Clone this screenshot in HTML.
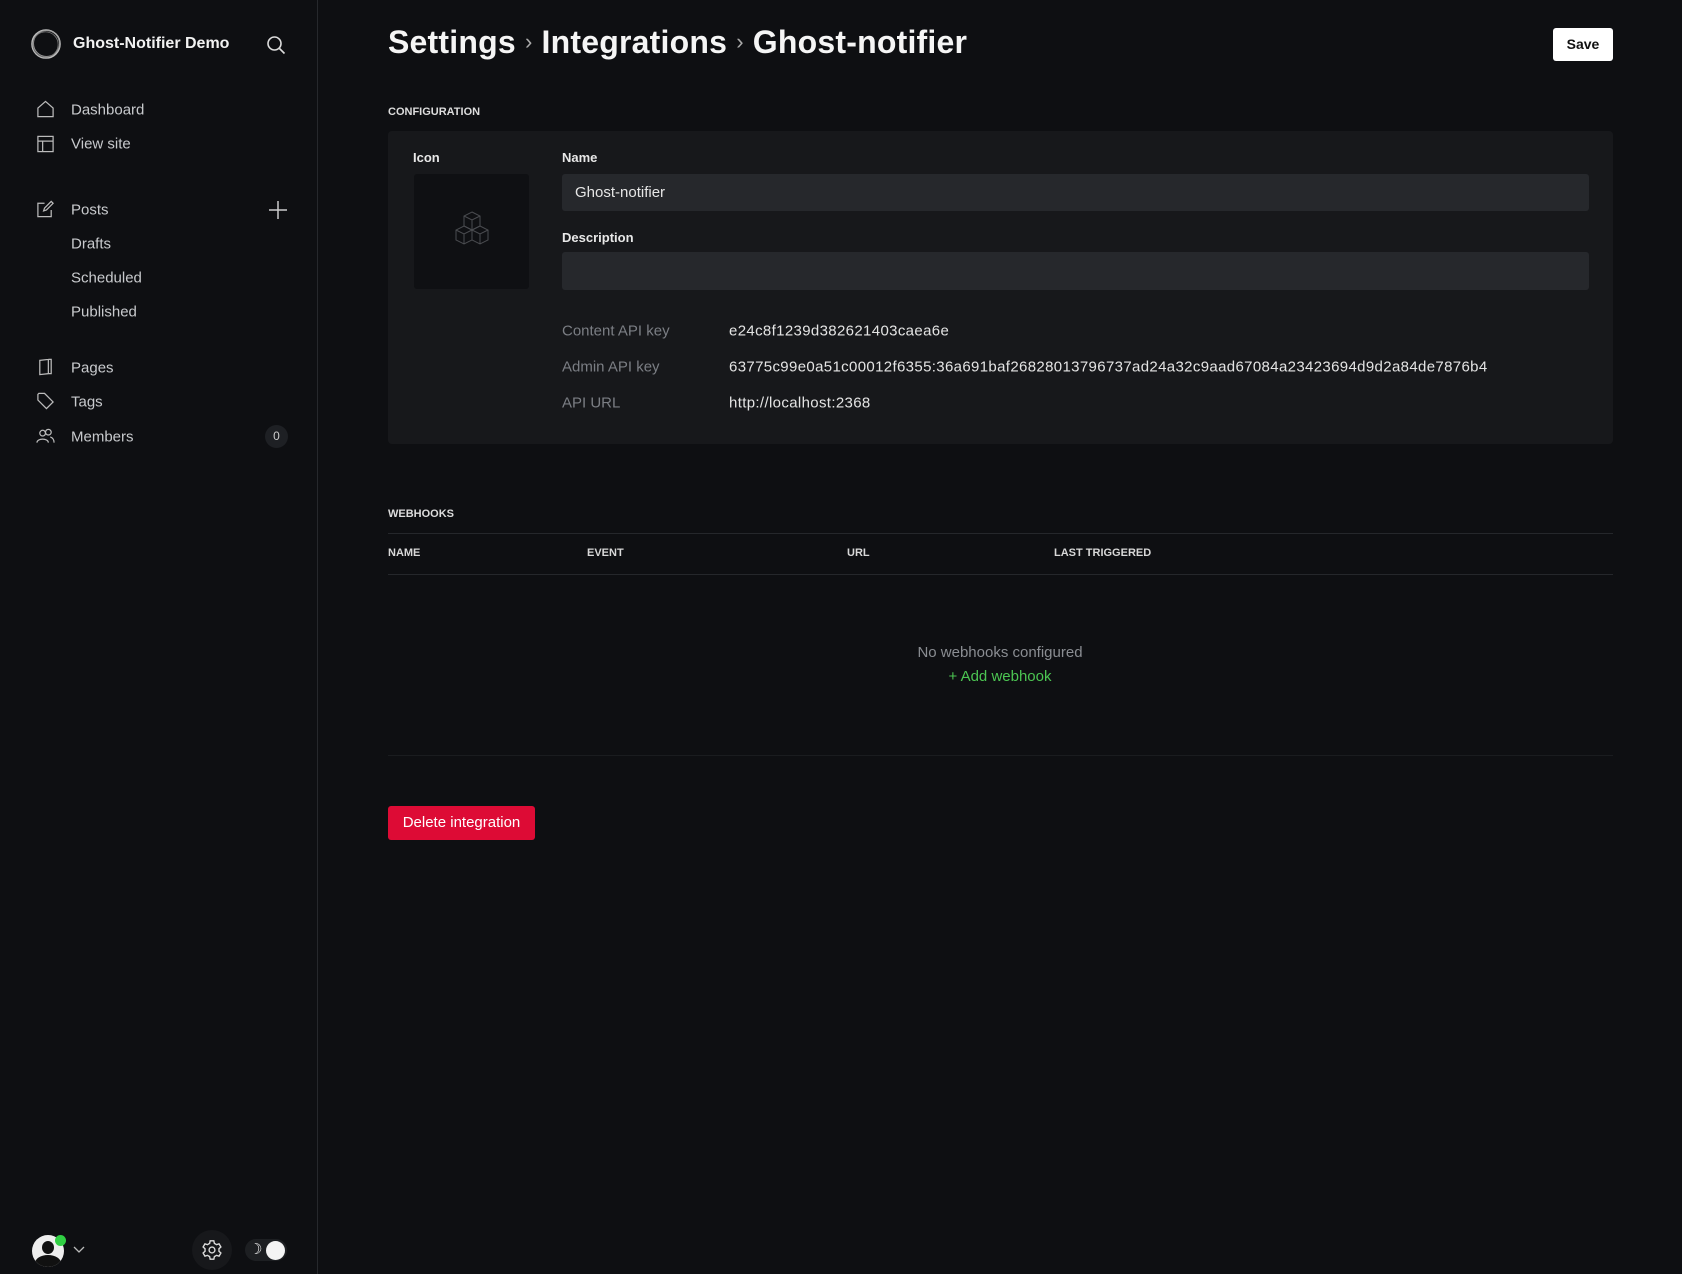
<!DOCTYPE html>
<html><head><meta charset="utf-8"><style>
*{box-sizing:border-box;margin:0;padding:0}
body{width:1682px;height:1274px;background:#0e0f12;font-family:"Liberation Sans",sans-serif;color:#ddd;position:relative;overflow:hidden}
.sb{position:absolute;left:0;top:0;width:318px;height:1274px;background:#0e0f12;border-right:1px solid #26282c}
.a{position:absolute}
.nav{position:absolute;left:71px;font-size:15px;color:#c8cacd;transform:translateY(-50%)}
.ic{position:absolute;left:36px;width:19px;height:19px;transform:translateY(-50%)}
.lbl{font-size:13px;font-weight:bold;color:#e8e8e8}
.k{position:absolute;left:562px;font-size:15px;color:#7b7e84;transform:translateY(-50%)}
.v{position:absolute;left:729px;font-size:15px;color:#e4e4e4;transform:translateY(-50%);letter-spacing:0.35px}
.th{position:absolute;top:553px;font-size:11px;font-weight:bold;color:#d8d8d8;transform:translateY(-50%)}
</style></head><body>
<div class="sb">
<svg class="a" style="left:29px;top:27px" width="34" height="34" viewBox="0 0 34 34"><circle cx="17" cy="17" r="14" fill="none" stroke="#bbb" stroke-width="1.6"/><circle cx="17.5" cy="16.5" r="13" fill="none" stroke="#999" stroke-width="1"/><circle cx="16.5" cy="17.5" r="12.6" fill="none" stroke="#777" stroke-width="0.8"/></svg>
<div class="a" style="left:73px;top:35px;font-size:16px;font-weight:bold;color:#f2f2f2">Ghost-Notifier Demo</div>
<svg class="a" style="left:266px;top:35px" width="20" height="20" viewBox="0 0 20 20" fill="none" stroke="#ddd" stroke-width="1.6"><circle cx="8.5" cy="8.5" r="6.5"/><path d="M13.5 13.5L18.5 18.5"/></svg>

<svg class="ic" style="top:109px" viewBox="0 0 20 20" fill="none" stroke="#bbb" stroke-width="1.3"><path d="M2 9L10 2L18 9V18H2Z"/></svg>
<div class="nav" style="top:110px">Dashboard</div>
<svg class="ic" style="top:144px" viewBox="0 0 20 20" fill="none" stroke="#bbb" stroke-width="1.3"><rect x="2" y="2" width="16" height="16"/><path d="M2 7H18M7 7V18"/></svg>
<div class="nav" style="top:144px">View site</div>
<svg class="ic" style="top:209px" viewBox="0 0 20 20" fill="none" stroke="#bbb" stroke-width="1.3"><path d="M9 4H2V18H16V11M8 12L9 9L16 2L18 4L11 11Z"/></svg>
<div class="nav" style="top:210px">Posts</div>
<svg class="a" style="left:268px;top:200px" width="20" height="20" viewBox="0 0 20 20" stroke="#ccc" stroke-width="1.5"><path d="M10 1V19M1 10H19"/></svg>
<div class="nav" style="top:244px">Drafts</div>
<div class="nav" style="top:278px">Scheduled</div>
<div class="nav" style="top:312px">Published</div>
<svg class="ic" style="top:367px" viewBox="0 0 20 20" fill="none" stroke="#bbb" stroke-width="1.3"><path d="M4 3L13 2V17L4 18ZM13 2H16V17H13"/></svg>
<div class="nav" style="top:368px">Pages</div>
<svg class="ic" style="top:401px" viewBox="0 0 20 20" fill="none" stroke="#bbb" stroke-width="1.3"><path d="M2 3V9L11 18L18 11L9 2H3Z"/></svg>
<div class="nav" style="top:402px">Tags</div>
<svg class="ic" style="top:436px" viewBox="0 0 20 20" fill="none" stroke="#bbb" stroke-width="1.3"><circle cx="7" cy="7" r="3"/><path d="M1 17C1 12 13 12 13 17"/><circle cx="13" cy="6" r="3"/><path d="M15 11C18 12 19 14 19 17"/></svg>
<div class="nav" style="top:437px">Members</div>
<div class="a" style="left:265px;top:425px;width:23px;height:23px;border-radius:50%;background:#1e2024;color:#ccc;font-size:12px;text-align:center;line-height:23px">0</div>

<div class="a" style="left:32px;top:1235px;width:32px;height:32px;border-radius:50%;background:#eee;overflow:hidden"><div class="a" style="left:10px;top:6px;width:12px;height:13px;border-radius:50%;background:#111"></div><div class="a" style="left:3px;top:20px;width:26px;height:16px;border-radius:50%;background:#111"></div></div>
<div class="a" style="left:55px;top:1235px;width:11px;height:11px;border-radius:50%;background:#30cf43"></div>
<svg class="a" style="left:73px;top:1246px" width="12" height="8" viewBox="0 0 12 8" fill="none" stroke="#bbb" stroke-width="1.3"><path d="M1 1L6 6L11 1"/></svg>
<div class="a" style="left:192px;top:1230px;width:40px;height:40px;border-radius:50%;background:#17181b"></div>
<svg class="a" style="left:201px;top:1239px" width="22" height="22" viewBox="0 0 24 24" fill="none" stroke="#ddd" stroke-width="1.5"><circle cx="12" cy="12" r="3.2"/><path d="M10 2h4l.6 2.8 2.4 1.4 2.7-.9 2 3.4-2.1 1.9v2.8l2.1 1.9-2 3.4-2.7-.9-2.4 1.4L14 22h-4l-.6-2.8-2.4-1.4-2.7.9-2-3.4 2.1-1.9v-2.8L2.3 8.7l2-3.4 2.7.9 2.4-1.4Z"/></svg>
<div class="a" style="left:245px;top:1239px;width:42px;height:22px;border-radius:11px;background:#1d1f22"></div>
<div class="a" style="left:249px;top:1240px;font-size:15px;color:#eee">☽</div>
<div class="a" style="left:266px;top:1241px;width:19px;height:19px;border-radius:50%;background:#f4f4f4"></div>
</div>

<div class="a" style="left:388px;top:24px;font-size:32px;font-weight:bold;color:#f5f5f5;white-space:nowrap;letter-spacing:0.2px">Settings <span style="font-weight:normal;font-size:22px;color:#aaa;vertical-align:4px">&#x203A;</span> Integrations <span style="font-weight:normal;font-size:22px;color:#aaa;vertical-align:4px">&#x203A;</span> Ghost-notifier</div>
<div class="a" style="left:1553px;top:28px;width:60px;height:33px;background:#fff;border-radius:3px;color:#111;font-size:14px;font-weight:bold;text-align:center;line-height:33px">Save</div>

<div class="a" style="left:388px;top:106px;font-size:11px;font-weight:bold;color:#ddd">CONFIGURATION</div>
<div class="a" style="left:388px;top:131px;width:1225px;height:313px;background:#17181b;border-radius:4px"></div>
<div class="a lbl" style="left:413px;top:150px">Icon</div>
<div class="a" style="left:414px;top:174px;width:115px;height:115px;background:#0f1013;border-radius:3px"></div>
<svg class="a" style="left:448px;top:210px" width="48" height="44" viewBox="0 0 48 44" fill="none" stroke="#4a4c50" stroke-width="1"><path d="M24 2L32 6V16L24 20L16 16V6ZM16 6L24 10L32 6M24 10V20"/><path d="M16 16L24 20V30L16 34L8 30V20ZM8 20L16 24L24 20M16 24V34"/><path d="M32 16L40 20V30L32 34L24 30V20ZM24 20L32 24L40 20M32 24V34"/></svg>
<div class="a lbl" style="left:562px;top:150px">Name</div>
<div class="a" style="left:562px;top:174px;width:1027px;height:37px;background:#26282c;border-radius:3px;padding-left:13px;line-height:37px;font-size:15px;color:#e6e6e6">Ghost-notifier</div>
<div class="a lbl" style="left:562px;top:230px">Description</div>
<div class="a" style="left:562px;top:252px;width:1027px;height:38px;background:#26282c;border-radius:3px"></div>
<div class="k" style="top:331px">Content API key</div><div class="v" style="top:331px">e24c8f1239d382621403caea6e</div>
<div class="k" style="top:367px">Admin API key</div><div class="v" style="top:367px">63775c99e0a51c00012f6355:36a691baf26828013796737ad24a32c9aad67084a23423694d9d2a84de7876b4</div>
<div class="k" style="top:403px">API URL</div><div class="v" style="top:403px">http://localhost:2368</div>

<div class="a" style="left:388px;top:508px;font-size:11px;font-weight:bold;color:#ddd">WEBHOOKS</div>
<div class="a" style="left:388px;top:533px;width:1225px;height:1px;background:#25272b"></div>
<div class="th" style="left:388px">NAME</div>
<div class="th" style="left:587px">EVENT</div>
<div class="th" style="left:847px">URL</div>
<div class="th" style="left:1054px">LAST TRIGGERED</div>
<div class="a" style="left:388px;top:574px;width:1225px;height:1px;background:#25272b"></div>
<div class="a" style="left:800px;top:644px;width:400px;text-align:center;font-size:15px;color:#8a8d92">No webhooks configured</div>
<div class="a" style="left:800px;top:668px;width:400px;text-align:center;font-size:15px;color:#4cc552">+ Add webhook</div>
<div class="a" style="left:388px;top:755px;width:1225px;height:1px;background:#1a1c1f"></div>
<div class="a" style="left:388px;top:806px;width:147px;height:34px;background:#dd0b35;border-radius:3px;color:#fff;font-size:15px;text-align:center;line-height:34px">Delete integration</div>
</body></html>
